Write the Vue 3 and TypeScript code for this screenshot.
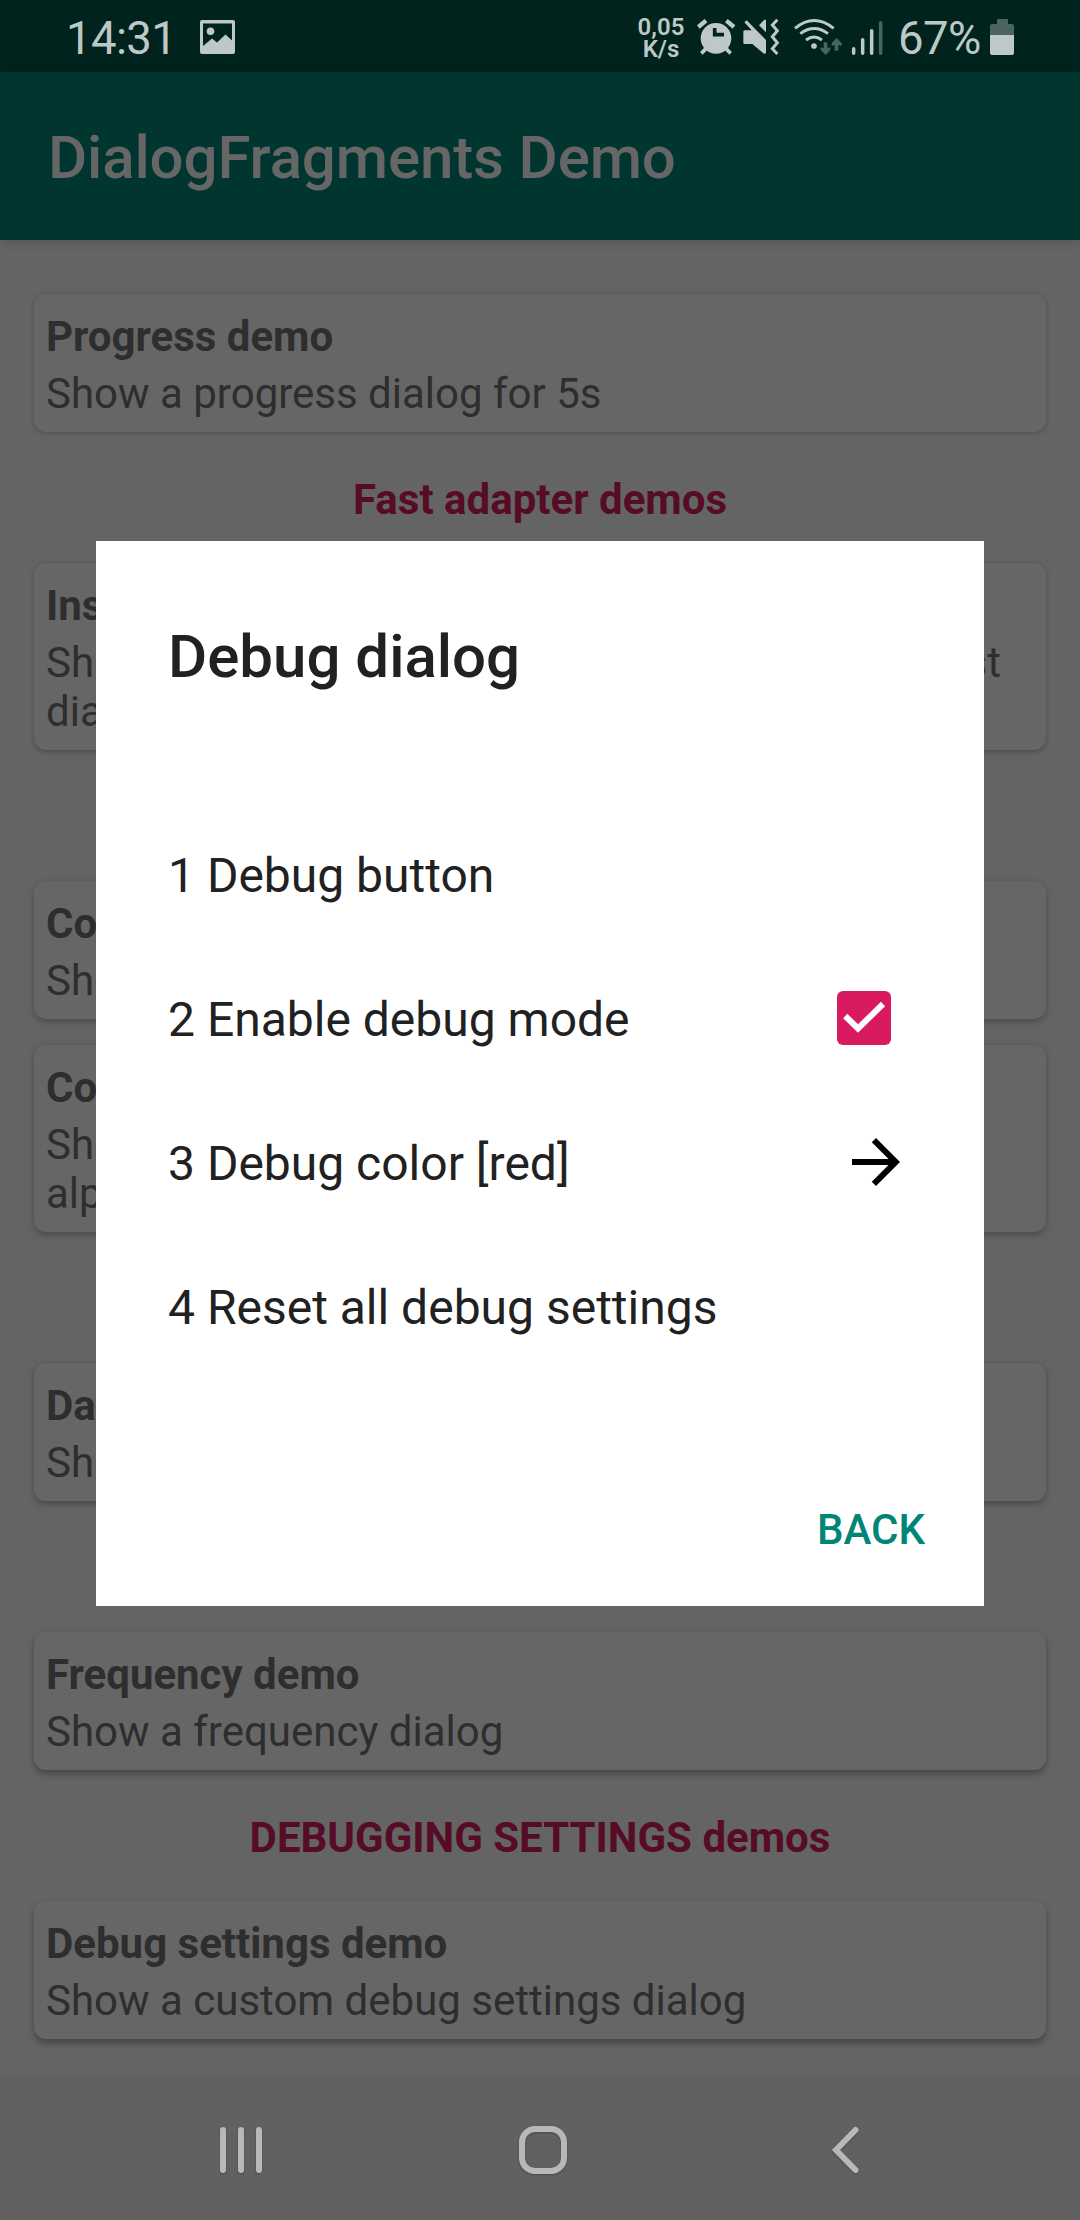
<script setup lang="ts">
interface Card {
  title: string
  lines: string[]
  justified?: boolean
}

interface Section {
  header?: string
  cards: Card[]
}

interface DebugItem {
  label: string
  widget?: 'checkbox' | 'arrow'
}

const sections: Section[] = [
  { cards: [{ title: 'Progress demo', lines: ['Show a progress dialog for 5s'] }] },
  {
    header: 'Fast adapter demos',
    cards: [
      {
        title: 'Install apps demo',
        lines: ['Show a fast adapter dialog with all apps in a list', 'dialog'],
        justified: true,
      },
    ],
  },
  {
    header: 'Color demos',
    cards: [
      { title: 'Color demo', lines: ['Show a color dialog'] },
      { title: 'Color demo with alpha', lines: ['Show a color dialog with', 'alpha'] },
    ],
  },
  { header: 'Date demos', cards: [{ title: 'Date demo', lines: ['Show a date dialog'] }] },
  { header: 'Frequency demos', cards: [{ title: 'Frequency demo', lines: ['Show a frequency dialog'] }] },
  {
    header: 'DEBUGGING SETTINGS demos',
    cards: [{ title: 'Debug settings demo', lines: ['Show a custom debug settings dialog'] }],
  },
]

const items: DebugItem[] = [
  { label: '1 Debug button' },
  { label: '2 Enable debug mode', widget: 'checkbox' },
  { label: '3 Debug color [red]', widget: 'arrow' },
  { label: '4 Reset all debug settings' },
]

// Shadows fall further the lower a card sits on the screen.
function cardShadow(section: number): string {
  return `0 ${1 + section * 0.6}px ${5 + section * 0.5}px rgba(0, 0, 0, ${0.22 + section * 0.02})`
}
</script>

<template>
  <div class="screen">
    <header class="status">
      <span class="clock">14:31</span>
      <svg class="picture" width="35" height="34" viewBox="0 0 35 34">
        <path fill="#bdc8c7" fill-rule="evenodd" d="M2 0H33Q35 0 35 2V32Q35 34 33 34H2Q0 34 0 32V2Q0 0 2 0ZM3 3.6V26L12 18.5L17 22.5L25.5 14.5L32 20.5V3.6Z" />
        <circle cx="10.5" cy="11.3" r="3.8" fill="#bdc8c7" />
      </svg>
      <span class="speed"><span>0,05</span><span>K/s</span></span>
      <svg class="alarm" width="40" height="40" viewBox="228 48 120 120">
        <circle cx="288" cy="115" r="46" fill="#bdc8c7" />
        <path d="M235 81L258 62M342 81L319 62" stroke="#bdc8c7" stroke-width="13" />
        <path d="M244 160L258 146M332 160L318 146" stroke="#bdc8c7" stroke-width="11" />
        <path d="M284 84V104H312" fill="none" stroke="#00231e" stroke-width="11" />
      </svg>
      <svg class="mute" width="40" height="40" viewBox="366 48 120 120">
        <path fill="#bdc8c7" d="M373 67L380 61L438 120V159L433 162L397 132H374Q370 132 370 128V95Q370 91 374 91H395ZM417 76L433 59H438V97Z" />
        <path d="M472 59L457 75L472 92L457 110L472 128L457 146L472 162" fill="none" stroke="#bdc8c7" stroke-width="9" />
      </svg>
      <svg class="wifi" width="50" height="40" viewBox="520 48 150 120">
        <g fill="none" stroke="#bdc8c7" stroke-width="8.5">
          <path d="M526 85Q583 38 642 85" />
          <path d="M542 101Q583 70 625 101" />
          <path d="M559 120Q583 102 607 120" />
        </g>
        <circle cx="583" cy="138" r="8.5" fill="#bdc8c7" />
        <path fill="#4b645f" d="M612 127H623V145L632 142V150L618 165L603 150V142L612 145ZM645 152H656V134L666 138V130L651 114L636 130V138L645 134Z" />
      </svg>
      <svg class="signal" width="34" height="36" viewBox="690 60 102 108">
        <g stroke="#bdc8c7" stroke-width="10.5" stroke-linecap="round">
          <path d="M701 146V160M728 119V160M755 92V160" />
          <path d="M782 68V160" stroke="#4b645f" />
        </g>
      </svg>
      <span class="percent">67%</span>
      <svg class="battery" width="24" height="36" viewBox="0 0 24 36">
        <path fill="#4b645f" d="M7 0H18V5H22Q24 5 24 7V16H0V7Q0 5 2 5H7Z" />
        <path fill="#bdc8c7" d="M0 16H24V34Q24 36 22 36H2Q0 36 0 34Z" />
      </svg>
    </header>

    <div class="appbar"><h1>DialogFragments Demo</h1></div>

    <main class="content">
      <section v-for="(section, i) in sections" :key="i">
        <h2 v-if="section.header">{{ section.header }}</h2>
        <div class="cards">
          <article v-for="card in section.cards" :key="card.title" class="card" :style="{ boxShadow: cardShadow(i) }">
            <h3>{{ card.title }}</h3>
            <p v-for="(line, n) in card.lines" :key="line" :class="{ wide: card.justified && n === 0 }">{{ line }}</p>
          </article>
        </div>
      </section>
    </main>

    <nav class="nav">
      <svg width="360" height="144" viewBox="0 0 360 144">
        <path d="M223 54V94M241 54V94M259 54V94" />
      </svg>
      <svg width="360" height="144" viewBox="0 0 360 144">
        <rect x="162" y="53" width="42" height="42" rx="13" />
      </svg>
      <svg width="360" height="144" viewBox="0 0 360 144">
        <path d="M135.5 54L116 74L135.5 94" />
      </svg>
    </nav>

    <div class="dialog">
      <h2 class="dialog-title">Debug dialog</h2>
      <ul>
        <li v-for="item in items" :key="item.label">
          <span>{{ item.label }}</span>
          <svg v-if="item.widget === 'checkbox'" class="checkbox" width="54" height="54" viewBox="0 0 54 54">
            <rect width="54" height="54" rx="6" fill="#d81b60" />
            <path d="M8.3 25L21 37.5L46 13" fill="none" stroke="#fff" stroke-width="6" />
          </svg>
          <svg v-if="item.widget === 'arrow'" class="arrow" width="72" height="72" viewBox="0 0 24 24">
            <path d="M12 4l-1.41 1.41L16.17 11H4v2h12.17l-5.58 5.59L12 20l8-8z" />
          </svg>
        </li>
      </ul>
      <button type="button">BACK</button>
    </div>
  </div>
</template>

<style>
body {
  margin: 0;
}
</style>

<style scoped>
.screen {
  position: relative;
  display: flex;
  flex-direction: column;
  width: 1080px;
  height: 2220px;
  overflow: hidden;
  background: #646464;
  font-family: Roboto, sans-serif;
}
h1, h2, h3, p, ul {
  margin: 0;
  padding: 0;
}
svg {
  display: block;
  flex: none;
}
.status {
  display: flex;
  align-items: flex-start;
  height: 72px;
  flex: none;
  background: #00231e;
  color: #bdc8c7;
}
.clock {
  width: 134px;
  margin-left: 66px;
  padding-top: 12px;
  font-size: 45.5px;
  letter-spacing: -0.6px;
  line-height: 54px;
}
.picture {
  margin-top: 20px;
}
.speed {
  display: flex;
  flex-direction: column;
  align-items: center;
  width: 50px;
  margin: 14px 0 0 401px;
  font-size: 24px;
  font-weight: 600;
  line-height: 22px;
  padding-top: 2px;
}
.alarm {
  margin: 16px 0 0 10px;
}
.mute {
  margin: 16px 0 0 6px;
}
.wifi {
  margin: 16px 0 0 11.3px;
}
.signal {
  margin: 20px 0 0 6.7px;
}
.percent {
  width: 92px;
  margin-left: 14px;
  padding-top: 12px;
  font-size: 45.5px;
  letter-spacing: -0.6px;
  line-height: 54px;
}
.battery {
  margin-top: 19px;
}
.appbar {
  height: 168px;
  flex: none;
  background: #003530;
  box-shadow: 0 2px 10px rgba(0, 0, 0, 0.16);
}
h1 {
  padding: 51px 0 0 48px;
  color: #666;
  font-size: 60px;
  font-weight: 500;
  letter-spacing: -0.12px;
  line-height: 70px;
}
.content {
  flex: 1;
  padding: 54px 34px 0;
}
.content h2 {
  padding: 43px 0 39px;
  color: #560b26;
  font-size: 42px;
  font-weight: 700;
  line-height: 49px;
  text-align: center;
}
.cards {
  display: flex;
  flex-direction: column;
  gap: 26px;
}
.card {
  padding: 18px 12px 14px;
  border-radius: 12px;
  background: #666;
  color: #2e2e2e;
  font-size: 42px;
  line-height: 49px;
}
h3 {
  margin-bottom: 8px;
  font-size: 42px;
  font-weight: 700;
}
.wide {
  width: 955px;
  text-align-last: justify;
}
.nav {
  display: flex;
  height: 144px;
  flex: none;
  background: #616161;
}
.nav svg {
  fill: none;
  stroke: #b8b8b8;
  stroke-width: 6;
  stroke-linecap: round;
  filter: drop-shadow(0 1px 1px rgba(0, 0, 0, 0.25));
}
.dialog {
  position: absolute;
  top: 541px;
  left: 96px;
  display: flex;
  flex-direction: column;
  box-sizing: border-box;
  width: 888px;
  height: 1065px;
  padding: 81px 72px 0;
  background: #fff;
  color: #212121;
}
.dialog-title {
  font-size: 60px;
  font-weight: 500;
  line-height: 70px;
}
ul {
  margin-top: 110px;
  list-style: none;
}
li {
  display: flex;
  align-items: center;
  justify-content: space-between;
  height: 144px;
  font-size: 48px;
  line-height: 56px;
}
li span {
  padding-top: 4px;
}
.checkbox {
  margin-right: 21px;
}
button {
  align-self: flex-end;
  margin: 127px -13px 0 0;
  padding: 0;
  border: 0;
  background: none;
  color: #008577;
  font-family: inherit;
  font-size: 42px;
  font-weight: 500;
  line-height: 49px;
}
</style>
